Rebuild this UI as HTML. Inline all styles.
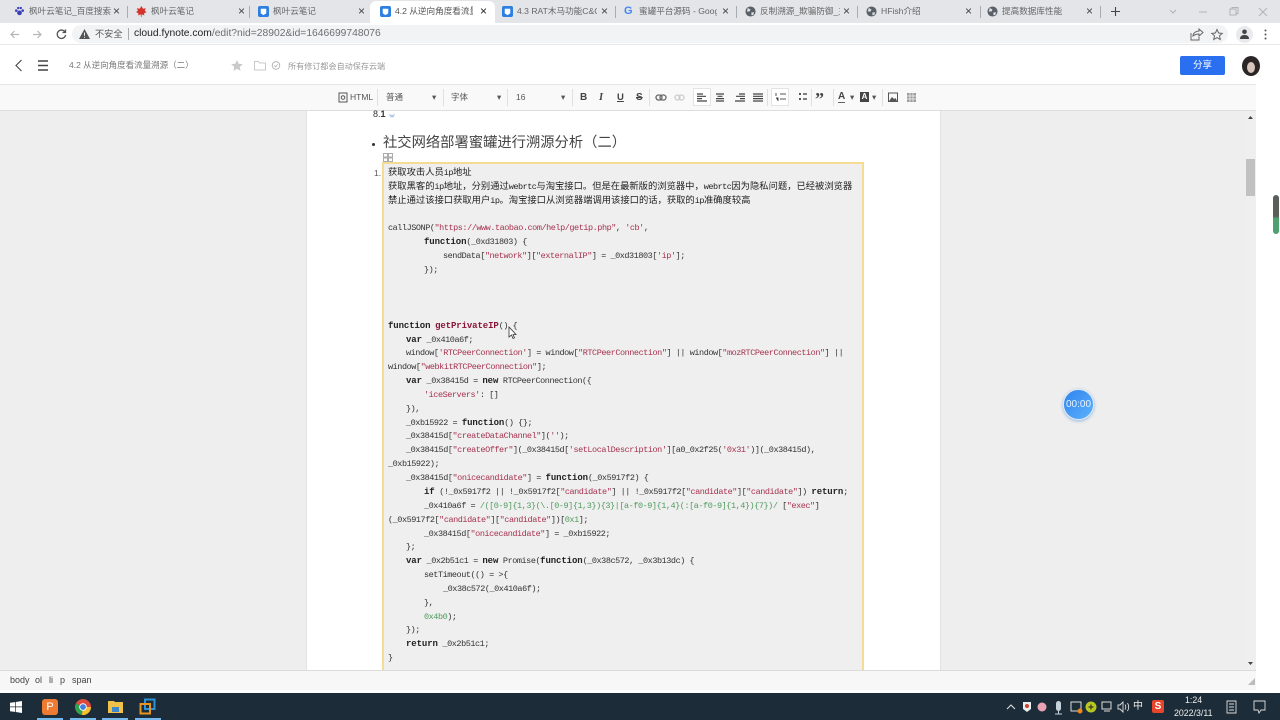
<!DOCTYPE html>
<html lang="zh"><head><meta charset="utf-8"><title>4.2 从逆向角度看流量溯源（二）</title>
<style>
*{box-sizing:border-box}
html,body{margin:0;padding:0;width:1280px;height:720px;overflow:hidden;background:#fff;font-family:"Liberation Sans","Noto Sans CJK SC",sans-serif}
.a{position:absolute;white-space:pre}
#strip{position:absolute;left:0;top:0;width:1280px;height:23px;background:#e3e5e8}
#bar{position:absolute;left:0;top:23px;width:1280px;height:22px;background:#fff;border-bottom:1px solid #e8e8e8}
#omni{position:absolute;left:72px;top:25px;width:1156px;height:18px;background:#f1f3f4;border-radius:9px}
.t{position:absolute;top:5px;font-size:8.6px;line-height:13px;color:#666;white-space:pre;overflow:hidden;filter:blur(.25px)}
.x{position:absolute;top:4px;font-size:12px;line-height:14px;color:#444}
.sep{position:absolute;top:6px;width:1px;height:12px;background:#a8abb0}
.ic{position:absolute;top:6px;width:11px;height:11px}
#act{position:absolute;left:370px;top:1px;width:125px;height:23px;background:#fff;border-radius:6px 6px 0 0}
#head{position:absolute;left:0;top:45px;width:1280px;height:39px;background:#fff}
#gray{position:absolute;left:0;top:84px;width:1256px;height:606px;background:#eeeeee}
#tb{position:absolute;left:0;top:84px;width:1256px;height:27px;background:#f9f9f9;border-bottom:1px solid #dedede;border-top:1px solid #e6e6e6}
#page{position:absolute;left:306px;top:111px;width:635px;height:559px;background:#fff;border-left:1px solid #e2e2e2;border-right:1px solid #e2e2e2}
#code{position:absolute;left:382px;top:162px;width:482px;height:520px;background:#efefef;border:2px solid #f6dc93}
#status{position:absolute;left:0;top:670px;width:1256px;height:20px;background:#f7f7f7;border-top:1px solid #dcdcdc;font-size:9px;color:#444}
#task{position:absolute;left:0;top:693px;width:1280px;height:27px;background:#1c2c38}
.l{position:absolute;font-family:"Liberation Mono","Noto Sans CJK SC",monospace;font-size:8.5px;letter-spacing:-.45px;line-height:14px;height:14px;color:#333;white-space:pre;filter:blur(.25px)}
.l b{font-size:9px;letter-spacing:-.1px;color:#222}
.l .f{font-size:9px;letter-spacing:-.1px;color:#8a1538;font-weight:bold}
.l i{font-style:normal;color:#a6324f}
.l u{text-decoration:none;color:#4f9a5e}
.c{font-size:9.3px;letter-spacing:0;color:#222}
.c span{font-size:8.5px;letter-spacing:-.5px}
.tl{position:absolute;top:91px;font-size:8.5px;line-height:13px;color:#555;white-space:pre}
.tg{position:absolute;top:89px;height:17px;width:1px;background:#e0e0e0}
</style></head><body>

<div id="strip"></div>
<div id="act"></div>

<svg class="ic" style="left:14px" viewBox="0 0 12 12"><circle cx="6" cy="7.5" r="2.6" fill="#3a3fb8"/><circle cx="2.5" cy="5" r="1.4" fill="#3a3fb8"/><circle cx="9.5" cy="5" r="1.4" fill="#3a3fb8"/><circle cx="4.6" cy="2.2" r="1.3" fill="#3a3fb8"/><circle cx="7.4" cy="2.2" r="1.3" fill="#3a3fb8"/></svg>
<div class="t" style="left:29px;width:82px">枫叶云笔记_百度搜索</div><div class="x" style="left:113px">×</div><div class="sep" style="left:127px"></div>
<svg class="ic" style="left:136px" viewBox="0 0 12 12"><path d="M6 0l1.6 3 3-.6-1 3 2 1.2-3 1.6.6 2-3-1-.2 2.8h-.6L5.200 9.200l-3 1 .6-2-2.800-1.600 2-1.200-1-3 3 .6z" fill="#d4322c"/></svg>
<div class="t" style="left:151px;width:80px">枫叶云笔记</div><div class="x" style="left:238px">×</div><div class="sep" style="left:249px"></div>
<svg class="ic" style="left:258px" viewBox="0 0 12 12"><rect width="12" height="12" rx="2" fill="#2d7fe0"/><path d="M3 3h6v5L6 10 3 8z" fill="#fff"/></svg>
<div class="t" style="left:273px;width:80px">枫叶云笔记</div><div class="x" style="left:358px">×</div>
<svg class="ic" style="left:380px" viewBox="0 0 12 12"><rect width="12" height="12" rx="2" fill="#2d7fe0"/><path d="M3 3h6v5L6 10 3 8z" fill="#fff"/></svg>
<div class="t" style="left:395px;width:78px;color:#555">4.2 从逆向角度看流量溯</div><div class="x" style="left:480px;color:#222">×</div>
<svg class="ic" style="left:502px" viewBox="0 0 12 12"><rect width="12" height="12" rx="2" fill="#2d7fe0"/><path d="M3 3h6v5L6 10 3 8z" fill="#fff"/></svg>
<div class="t" style="left:517px;width:80px">4.3 RAT木马功能C&amp;C</div><div class="x" style="left:601px">×</div><div class="sep" style="left:615px"></div>
<div class="a" style="left:624px;top:4px;font-size:11px;line-height:14px;font-weight:bold;color:#4285f4">G</div>
<div class="t" style="left:639px;width:78px">蜜罐平台源码 - Google</div><div class="x" style="left:722px">×</div><div class="sep" style="left:736px"></div>
<svg class="ic" style="left:745px" viewBox="0 0 12 12"><circle cx="6" cy="6" r="5.500" fill="#5a6068"/><path d="M3 2l3 2-1 2-3 0zM7 7l3 0-1 3-2 0z" fill="#dee1e6"/></svg>
<div class="t" style="left:760px;width:80px">反制溯源_欺骗防御_主</div><div class="x" style="left:843px">×</div><div class="sep" style="left:857px"></div>
<svg class="ic" style="left:866px" viewBox="0 0 12 12"><circle cx="6" cy="6" r="5.500" fill="#5a6068"/><path d="M3 2l3 2-1 2-3 0zM7 7l3 0-1 3-2 0z" fill="#dee1e6"/></svg>
<div class="t" style="left:881px;width:80px">HFish介绍</div><div class="x" style="left:965px">×</div><div class="sep" style="left:980px"></div>
<svg class="ic" style="left:987px" viewBox="0 0 12 12"><circle cx="6" cy="6" r="5.500" fill="#5a6068"/><path d="M3 2l3 2-1 2-3 0zM7 7l3 0-1 3-2 0z" fill="#dee1e6"/></svg>
<div class="t" style="left:1002px;width:80px">提高数据库性能</div><div class="x" style="left:1086px">×</div><div class="sep" style="left:1100px"></div>
<svg style="position:absolute;left:1110px;top:6px" width="11" height="11" viewBox="0 0 11 11"><path d="M5.500 1v9M1 5.500h9" stroke="#444" stroke-width="1.100"/></svg>
<svg style="position:absolute;left:1168px;top:6px" width="110" height="12" viewBox="0 0 110 12" fill="none" stroke="#b0b2b5" stroke-width="1"><path d="M2 4l3 3 3-3"/><path d="M31 6h8"/><rect x="62" y="3" width="6" height="6"/><path d="M64 3V1.500h6v6h-2"/><path d="M91 2l8 8M99 2l-8 8"/></svg>

<div id="bar"></div><div id="omni"></div>
<svg style="position:absolute;left:9px;top:28px" width="60" height="13" viewBox="0 0 60 13" fill="none"><path d="M10 6.500H2M5.500 3L2 6.500 5.500 10" stroke="#b4b6b9" stroke-width="1.200"/><path d="M24 6.500h8M28.500 3L32 6.500 28.500 10" stroke="#b4b6b9" stroke-width="1.200"/><path d="M56 4a4.200 4.200 0 1 0 .6 3M56.500 1.500V4.500H53.500" stroke="#555" stroke-width="1.300"/></svg>
<svg style="position:absolute;left:79px;top:29px" width="11" height="10" viewBox="0 0 11 10"><path d="M5.500 0L11 10H0z" fill="#555"/><path d="M5.500 3.500v3.300M5.500 7.700v1" stroke="#f1f3f4"/></svg>
<div class="a" style="left:95px;top:27px;font-size:9.200px;line-height:14px;color:#555">不安全</div>
<div class="a" style="left:128px;top:28px;width:1px;height:12px;background:#aaa"></div>
<div class="a" style="left:134px;top:27px;font-size:10.300px;line-height:14px;color:#6c6f72"><span style="color:#222">cloud.fynote.com</span>/edit?nid=28902&amp;id=1646699748076</div>
<svg style="position:absolute;left:1190px;top:28px" width="34" height="13" viewBox="0 0 34 13" fill="none" stroke="#666"><path d="M1 5v7h8V9M3 8c0-3 3-5 6-5V1l4 3.500L9 8V6C7 6 5 6.500 3 8z"/><path d="M27 1.500l1.600 3.500 3.600.4-2.700 2.400.8 3.700-3.300-1.900-3.300 1.900.8-3.700-2.700-2.400 3.600-.4z"/></svg>
<div class="a" style="left:1236px;top:26px;width:17px;height:17px;border-radius:50%;background:#e8eaed"></div>
<svg style="position:absolute;left:1240px;top:29px" width="9" height="10" viewBox="0 0 9 10"><circle cx="4.500" cy="2.800" r="2.300" fill="#444"/><path d="M0 10c0-3 2-4 4.500-4S9 7 9 10z" fill="#444"/></svg>
<svg style="position:absolute;left:1264px;top:29px" width="3" height="11" viewBox="0 0 3 11" fill="#555"><circle cx="1.500" cy="1.500" r="1"/><circle cx="1.500" cy="5.500" r="1"/><circle cx="1.500" cy="9.500" r="1"/></svg>

<div id="head"></div>
<svg style="position:absolute;left:14px;top:59px" width="36" height="13" viewBox="0 0 36 13" fill="none" stroke="#444"><path d="M7.500 1L2 6.500 7.500 12" stroke-width="1.100"/><path d="M24 2h10M24 6.500h10M24 11h10" stroke-width="1.500"/></svg>
<div class="a" style="left:69px;top:59px;font-size:8.500px;line-height:13px;color:#777">4.2 从逆向角度看流量溯源（二）</div>
<svg style="position:absolute;left:231px;top:59px" width="52" height="13" viewBox="0 0 52 13"><path d="M6 1l1.700 3.800 4.100.4-3.100 2.700.9 4L6 9.800 2.400 11.900l.9-4L.2 5.200l4.100-.4z" fill="#c9c9c9"/><path d="M23.500 2.500h4l1 1.500h6v7h-11z" fill="none" stroke="#c9c9c9"/><circle cx="45" cy="6.500" r="3.800" fill="none" stroke="#aaa" stroke-width=".8"/><path d="M43.300 6.500l1.300 1.300 2-2.300" fill="none" stroke="#aaa" stroke-width=".8"/></svg>
<div class="a" style="left:288px;top:60px;font-size:8.100px;line-height:13px;color:#999">所有修订都会自动保存云端</div>
<div class="a" style="left:1180px;top:56px;width:45px;height:19px;background:#2a6ff0;border-radius:2px;color:#fff;font-size:9.500px;line-height:19px;text-align:center">分享</div>
<div class="a" style="left:1242px;top:56px;width:18px;height:20px;border-radius:50%;background:#2b2525"></div>
<div class="a" style="left:1247px;top:62px;width:8px;height:11px;border-radius:50%;background:#d8c5bd"></div>

<div id="gray"></div>
<div id="page"></div>

<div id="tb"></div>
<svg style="position:absolute;left:338px;top:92px" width="10" height="11" viewBox="0 0 10 11" fill="none" stroke="#555"><rect x="1" y="1" width="8" height="9"/><circle cx="5" cy="5.500" r="1.800"/></svg>
<div class="tl" style="left:350px">HTML</div><div class="tg" style="left:377px"></div>
<div class="tl" style="left:386px">普通</div><div class="tl" style="left:432px">▾</div><div class="tg" style="left:443px"></div>
<div class="tl" style="left:451px">字体</div><div class="tl" style="left:497px">▾</div><div class="tg" style="left:507px"></div>
<div class="tl" style="left:516px">16</div><div class="tl" style="left:561px">▾</div><div class="tg" style="left:572px"></div>
<div class="tl" style="left:580px;font-weight:bold;font-size:10px;color:#444">B</div>
<div class="tl" style="left:599px;font-style:italic;font-family:'Liberation Serif',serif;font-weight:bold;font-size:10.500px;color:#444">I</div>
<div class="tl" style="left:617px;font-weight:bold;text-decoration:underline;font-size:9.500px;color:#444">U</div>
<div class="tl" style="left:636px;font-weight:bold;text-decoration:line-through;font-size:10px;color:#444">S</div>
<div class="tg" style="left:649px"></div>
<svg style="position:absolute;left:655px;top:92px" width="36" height="11" viewBox="0 0 36 11" fill="none"><rect x="1" y="3" width="6" height="5" rx="2.500" stroke="#666" stroke-width="1.300"/><rect x="5" y="3" width="6" height="5" rx="2.500" stroke="#666" stroke-width="1.300"/><rect x="20" y="3" width="5" height="5" rx="2.500" stroke="#ccc" stroke-width="1.300"/><rect x="24" y="3" width="5" height="5" rx="2.500" stroke="#ccc" stroke-width="1.300"/></svg>
<div class="a" style="left:693px;top:88px;width:18px;height:18px;background:#fff;border:1px solid #e4e4e4"></div>
<svg style="position:absolute;left:697px;top:93px" width="70" height="9" viewBox="0 0 70 9" stroke="#444" stroke-width="1.200"><path d="M0 1h6M0 3.300h9M0 5.600h5M0 8h10"/><path d="M19 1h8M20.500 3.300h5M19 5.600h8M19 8h8"/><path d="M42 1h6M39 3.300h9M43 5.600h5M38 8h10"/><path d="M56 1h10M56 3.300h10M56 5.600h10M56 8h10"/></svg>
<div class="tg" style="left:767px"></div>
<div class="a" style="left:771px;top:88px;width:18px;height:18px;background:#fff;border:1px solid #e4e4e4"></div>
<svg style="position:absolute;left:775px;top:92px" width="32" height="10" viewBox="0 0 32 10" stroke="#555"><path d="M5 2h6M5 7h6M1 1v3M1 6h2v3"/><path d="M24 2h2M24 7h2" stroke-width="2"/><path d="M28 2h4M28 7h4" stroke-width="1.500"/></svg>
<div class="tg" style="left:811px"></div>
<div class="a" style="left:815px;top:88px;font-size:18px;line-height:22px;font-weight:bold;font-family:'Liberation Serif',serif;color:#444">”</div>
<div class="tg" style="left:833px"></div>
<div class="tl" style="left:838px;font-weight:bold;font-size:10px;color:#444;border-bottom:1px solid #666;line-height:11px">A</div><div class="tl" style="left:850px">▾</div>
<div class="a" style="left:860px;top:92px;width:9px;height:10px;background:#444;color:#fff;font-size:8px;line-height:10px;text-align:center;font-weight:bold">A</div><div class="tl" style="left:872px">▾</div>
<div class="tg" style="left:882px"></div>
<svg style="position:absolute;left:888px;top:92px" width="30" height="11" viewBox="0 0 30 11"><rect x="0.500" y="1" width="9" height="8.500" fill="none" stroke="#555"/><path d="M1 9l3-4 2 2 1.500-1L9 9z" fill="#555"/><rect x="19" y="1" width="9" height="9" fill="#9c9c9c"/><path d="M22 1v9M25 1v9M19 4h9M19 7h9" stroke="#f9f9f9" stroke-width=".7"/></svg>

<div class="a" style="left:373px;top:108px;font-size:9px;line-height:13px;color:#333">8.<b>1</b></div>
<svg style="position:absolute;left:389px;top:113px" width="6" height="5" viewBox="0 0 6 5"><path d="M.5 1l1.500 3 1-2 1 2 1.500-3" fill="none" stroke="#8fb4d8" stroke-width=".8"/></svg>
<div class="a" style="left:372px;top:143px;width:3px;height:3px;border-radius:50%;background:#333"></div>
<div class="a" style="left:383px;top:133px;font-size:14.300px;line-height:20px;color:#444">社交网络部署蜜罐进行溯源分析（二）</div>
<svg style="position:absolute;left:383px;top:153px" width="10" height="9" viewBox="0 0 10 9" fill="none" stroke="#888" stroke-width=".7"><rect x=".5" y=".5" width="4" height="3.500"/><rect x="5.500" y=".5" width="4" height="3.500"/><rect x=".5" y="5" width="4" height="3.500"/><rect x="5.500" y="5" width="4" height="3.500"/></svg>
<div class="a" style="left:374px;top:167px;font-size:8.500px;line-height:13px;color:#555">1.</div>

<div style="position:absolute;left:0;top:0;width:1280px;height:670px;overflow:hidden">
<div id="code"></div>
<div class="l c" style="left:388px;top:166px">获取攻击人员<span>ip</span>地址</div>
<div class="l c" style="left:388px;top:180px">获取黑客的<span>ip</span>地址，分别通过<span>webrtc</span>与淘宝接口。但是在最新版的浏览器中，<span>webrtc</span>因为隐私问题，已经被浏览器</div>
<div class="l c" style="left:388px;top:194px">禁止通过该接口获取用户<span>ip</span>。淘宝接口从浏览器端调用该接口的话，获取的<span>ip</span>准确度较高</div>
<div class="l" style="left:388px;top:221px">callJSONP(<i>"https://www.taobao.com/help/getip.php"</i>, <i>'cb'</i>,</div>
<div class="l" style="left:424px;top:235px"><b>function</b>(_0xd31803) {</div>
<div class="l" style="left:443px;top:249px">sendData[<i>"network"</i>][<i>"externalIP"</i>] = _0xd31803[<i>'ip'</i>];</div>
<div class="l" style="left:424px;top:263px">});</div>
<div class="l" style="left:388px;top:319px"><b>function</b> <span class="f">getPrivateIP</span>() {</div>
<div class="l" style="left:406px;top:333px"><b>var</b> _0x410a6f;</div>
<div class="l" style="left:406px;top:346px">window[<i>'RTCPeerConnection'</i>] = window[<i>"RTCPeerConnection"</i>] || window[<i>"mozRTCPeerConnection"</i>] ||</div>
<div class="l" style="left:388px;top:360px">window[<i>"webkitRTCPeerConnection"</i>];</div>
<div class="l" style="left:406px;top:374px"><b>var</b> _0x38415d = <b>new</b> RTCPeerConnection({</div>
<div class="l" style="left:424px;top:388px"><i>'iceServers'</i>: []</div>
<div class="l" style="left:406px;top:402px">}),</div>
<div class="l" style="left:406px;top:416px">_0xb15922 = <b>function</b>() {};</div>
<div class="l" style="left:406px;top:429px">_0x38415d[<i>"createDataChannel"</i>](<i>''</i>);</div>
<div class="l" style="left:406px;top:443px">_0x38415d[<i>"createOffer"</i>](_0x38415d[<i>'setLocalDescription'</i>][a0_0x2f25(<i>'0x31'</i>)](_0x38415d),</div>
<div class="l" style="left:388px;top:457px">_0xb15922);</div>
<div class="l" style="left:406px;top:471px">_0x38415d[<i>"onicecandidate"</i>] = <b>function</b>(_0x5917f2) {</div>
<div class="l" style="left:424px;top:485px"><b>if</b> (!_0x5917f2 || !_0x5917f2[<i>"candidate"</i>] || !_0x5917f2[<i>"candidate"</i>][<i>"candidate"</i>]) <b>return</b>;</div>
<div class="l" style="left:424px;top:499px">_0x410a6f = <u>/([0-9]{1,3}(\.[0-9]{1,3}){3}|[a-f0-9]{1,4}(:[a-f0-9]{1,4}){7})/</u> [<i>"exec"</i>]</div>
<div class="l" style="left:388px;top:513px">(_0x5917f2[<i>"candidate"</i>][<i>"candidate"</i>])[<u>0x1</u>];</div>
<div class="l" style="left:424px;top:527px">_0x38415d[<i>"onicecandidate"</i>] = _0xb15922;</div>
<div class="l" style="left:406px;top:540px">};</div>
<div class="l" style="left:406px;top:554px"><b>var</b> _0x2b51c1 = <b>new</b> Promise(<b>function</b>(_0x38c572, _0x3b13dc) {</div>
<div class="l" style="left:424px;top:568px">setTimeout(() = &gt;{</div>
<div class="l" style="left:443px;top:582px">_0x38c572(_0x410a6f);</div>
<div class="l" style="left:424px;top:596px">},</div>
<div class="l" style="left:424px;top:610px"><u>0x4b0</u>);</div>
<div class="l" style="left:406px;top:623px">});</div>
<div class="l" style="left:406px;top:637px"><b>return</b> _0x2b51c1;</div>
<div class="l" style="left:388px;top:651px">}</div>
</div>

<svg style="position:absolute;left:508px;top:326px" width="10" height="14" viewBox="0 0 10 14"><path d="M1 1v10l2.500-2 1.500 3.500 1.500-.7L5 8.500h3z" fill="#fff" stroke="#333" stroke-width=".8"/></svg>

<!-- scrollbar -->
<div class="a" style="left:1246px;top:111px;width:10px;height:559px;background:#efefef"></div>
<div class="a" style="left:1246px;top:159px;width:9px;height:37px;background:#c1c1c1"></div>
<svg style="position:absolute;left:1247px;top:116px" width="7" height="550" viewBox="0 0 7 550" fill="#444"><path d="M3.500 0L6 3H1z"/><path d="M3.500 549L6 546H1z"/></svg>
<div class="a" style="left:1273px;top:195px;width:6px;height:39px;border-radius:3px;background:linear-gradient(#5a5f5c 55%,#4fa06f 60%)"></div>

<div class="a" style="left:1063px;top:389px;width:31px;height:31px;border-radius:50%;background:linear-gradient(135deg,#2f83ee,#5db2fb);border:1px solid #dceaf8;box-shadow:0 1px 3px rgba(60,120,200,.5);color:#e8f3ff;font-size:10px;line-height:29px;text-align:center">00:00</div>

<div id="status"><span class="a" style="left:10px;top:3px;line-height:13px">body</span><span class="a" style="left:35px;top:3px;line-height:13px">ol</span><span class="a" style="left:49px;top:3px;line-height:13px">li</span><span class="a" style="left:60px;top:3px;line-height:13px">p</span><span class="a" style="left:72px;top:3px;line-height:13px">span</span>
<svg style="position:absolute;left:1248px;top:7px" width="7" height="7" viewBox="0 0 7 7"><path d="M7 0v7H0z" fill="#bbb"/></svg></div>

<div id="task"></div>
<svg style="position:absolute;left:10px;top:701px" width="12" height="12" viewBox="0 0 12 12" fill="#fff"><path d="M0 1.800l5-.7v4.400H0zM5.700 1l6.300-1v5.500H5.700zM0 6.200h5v4.700l-5-.7zM5.700 6.200H12V12l-6.300-1z"/></svg>
<div class="a" style="left:42px;top:699px;width:16px;height:16px;border-radius:3px;background:#ee7b33;color:#fff;font-size:11px;line-height:16px;text-align:center">P</div>
<svg style="position:absolute;left:75px;top:699px" width="16" height="16" viewBox="0 0 16 16"><circle cx="8" cy="8" r="8" fill="#dd4b3e"/><path d="M8 8L1 4.500A8 8 0 0 0 7 16z" fill="#2ea44f"/><path d="M8 8h8A8 8 0 0 1 7 16z" fill="#f6c02c"/><circle cx="8" cy="8" r="3.800" fill="#fff"/><circle cx="8" cy="8" r="2.900" fill="#3f7fe3"/></svg>
<svg style="position:absolute;left:108px;top:700px" width="15" height="13" viewBox="0 0 15 13"><path d="M0 1h6l1 1h8v11H0z" fill="#f2c14a"/><rect x="4" y="7" width="7" height="5" fill="#3f88c9"/></svg>
<svg style="position:absolute;left:139px;top:698px" width="17" height="17" viewBox="0 0 17 17" fill="none" stroke-width="2"><rect x="6" y="1.500" width="9.500" height="9.500" stroke="#2b93d6"/><rect x="1.500" y="6" width="9.500" height="9.500" stroke="#e8941f"/></svg>
<div class="a" style="left:37px;top:718px;width:26px;height:2px;background:#76b9ed"></div>
<div class="a" style="left:70px;top:718px;width:26px;height:2px;background:#76b9ed"></div>
<div class="a" style="left:102px;top:718px;width:26px;height:2px;background:#76b9ed"></div>
<div class="a" style="left:135px;top:718px;width:26px;height:2px;background:#76b9ed"></div>

<svg style="position:absolute;left:1006px;top:698px" width="165" height="18" viewBox="0 0 165 18" fill="none"><path d="M1 11l4-4 4 4" stroke="#ddd" stroke-width="1.100"/><path d="M17 4h8v7l-4 3-4-3z" fill="#e8f0ee"/><circle cx="21" cy="8" r="2" fill="#d0402f"/><circle cx="36" cy="9" r="4.500" fill="#e9a3b5"/><rect x="50" y="3" width="5" height="10" rx="2.500" fill="#c8d2dc"/><path d="M52.500 13v3M49 16h7" stroke="#c8d2dc"/><rect x="65" y="4" width="10" height="9" stroke="#ddd"/><circle cx="74" cy="13" r="2.500" fill="#ef8a1e"/><circle cx="85" cy="9" r="5.500" fill="#b7c91f"/><path d="M82.500 9h5M85 6.500v5" stroke="#333" stroke-width="1.200"/><rect x="96" y="4" width="9" height="7" stroke="#ddd"/><path d="M98 13h6" stroke="#ddd"/><path d="M112 7h2l3-3v10l-3-3h-2zM119 6.500c1 1.500 1 3.500 0 5M121.500 5c1.500 2.500 1.500 5.500 0 8" stroke="#ddd" stroke-width=".9"/></svg>
<div class="a" style="left:1133px;top:700px;font-size:10px;line-height:13px;color:#eee">中</div>
<div class="a" style="left:1152px;top:700px;width:12px;height:13px;border-radius:2px;background:#e8452c;color:#fff;font-weight:bold;font-size:10px;line-height:13px;text-align:center">S</div>
<div class="a" style="left:1185px;top:695px;font-size:8.800px;line-height:11px;color:#eee">1:24</div>
<div class="a" style="left:1174px;top:708px;font-size:8.800px;line-height:11px;color:#eee">2022/3/11</div>
<svg style="position:absolute;left:1226px;top:700px" width="42" height="14" viewBox="0 0 42 14" fill="none" stroke="#ddd" stroke-width=".9"><path d="M1 1h9v12H1zM3 4h5M3 7h5M3 10h5"/><path d="M28 1h11v9h-4l-2 3-1-3h-4z"/></svg>
</body></html>
